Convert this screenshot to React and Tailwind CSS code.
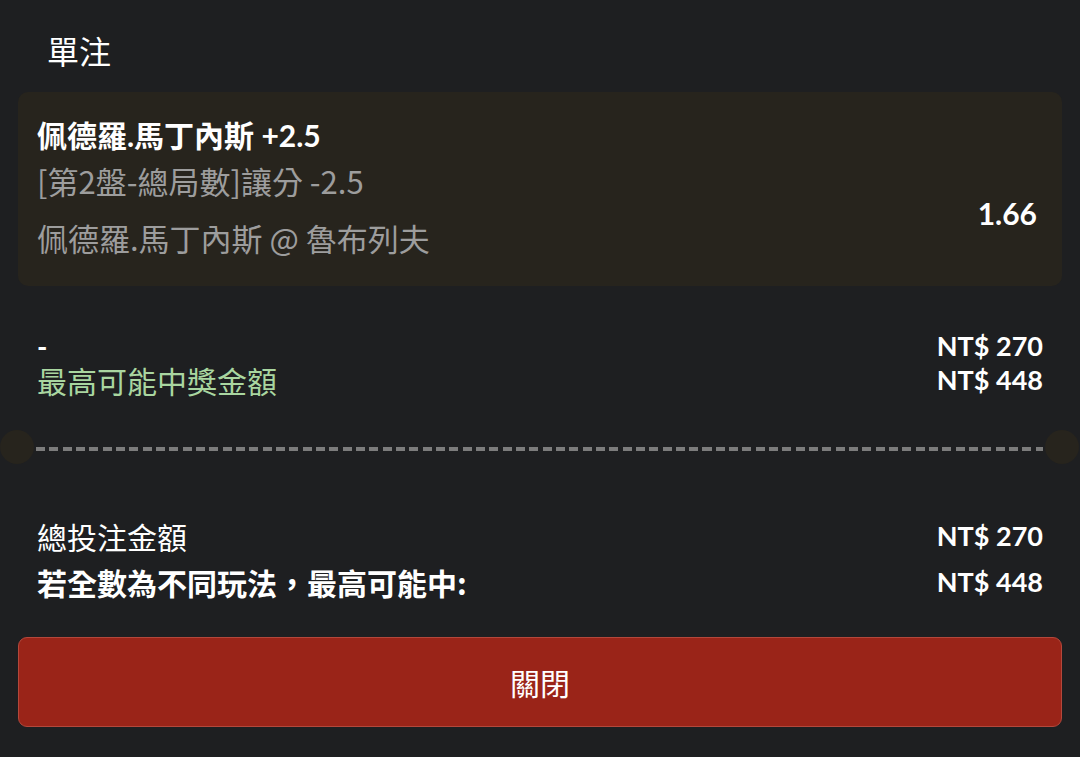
import React from "react";

const lato = "font-['Lato','Noto_Sans_CJK_TC',sans-serif]";
const noto = "font-['Noto_Sans_CJK_TC',sans-serif]";

const Fila = ({ izq, der, izqClass }) => (
    <div className="flex items-center justify-between h-[34px] pl-[37px] pr-[37px]">
        <span className={`leading-[34px] ${izqClass}`}>{izq}</span>
        <span className={`${lato} text-[27px] leading-[34px] font-bold text-white`}>{der}</span>
    </div>
);

export default function App() {
    return (
        <div className={`w-[1080px] h-[757px] bg-[#1e1f21] overflow-hidden ${lato}`}>
            {/* titulo */}
            <div className="h-[92px] pl-[47px] pt-[30px]">
                <h1 className={`${noto} text-[32px] leading-[40px] text-white`}>單注</h1>
            </div>

            {/* tarjeta de la apuesta */}
            <div className="mx-[18px] h-[194px] rounded-[10px] bg-[#27241d] flex pl-[19px] pr-[25px] pt-[23px]">
                <div className="flex flex-col">
                    <div className="text-[30px] leading-[40px] font-bold text-white">
                        佩德羅.馬丁內斯 +2.5
                    </div>
                    <div className={`${noto} text-[31px] leading-[40px] text-[#9d9d9d] mt-[6px]`}>
                        [第2盤-總局數]讓分 -2.5
                    </div>
                    <div className={`${noto} text-[31px] leading-[40px] text-[#9d9d9d] mt-[17px]`}>
                        佩德羅.馬丁內斯 @ 魯布列夫
                    </div>
                </div>
                <div className="ml-auto mt-[83px] text-[30px] leading-[30px] font-bold text-white">
                    1.66
                </div>
            </div>

            {/* montos */}
            <div className="mt-[43px] flex flex-col">
                <Fila izq="-" der="NT$ 270" izqClass="text-[28px] font-bold text-white" />
                <Fila
                    izq="最高可能中獎金額"
                    der="NT$ 448"
                    izqClass={`${noto} text-[30px] text-[#a9d6a0]`}
                />
            </div>

            {/* separador tipo ticket */}
            <div className="mt-[33px] h-[34px] flex items-center">
                <div className="w-[34px] h-[34px] rounded-full bg-[#27241d] shrink-0" />
                <div className="flex-1 h-[4px] mt-[4px] mx-[2px] bg-[repeating-linear-gradient(to_right,#7c7c7c_0px,#7c7c7c_9px,transparent_9px,transparent_13.33px)]" />
                <div className="w-[34px] h-[34px] rounded-full bg-[#27241d] shrink-0 mr-px" />
            </div>

            {/* totales */}
            <div className="mt-[55px] flex flex-col gap-[12px]">
                <Fila izq="總投注金額" der="NT$ 270" izqClass={`${noto} text-[30px] text-white`} />
                <Fila
                    izq="若全數為不同玩法，最高可能中:"
                    der="NT$ 448"
                    izqClass={`${noto} text-[30px] font-bold text-white`}
                />
            </div>

            <button className={`${noto} mt-[38px] mx-[18px] w-[1044px] h-[90px] rounded-[9px] bg-[#9a2418] border-[1.5px] border-[#b4473b] text-[30px] text-white`}>
                關閉
            </button>
        </div>
    );
}
